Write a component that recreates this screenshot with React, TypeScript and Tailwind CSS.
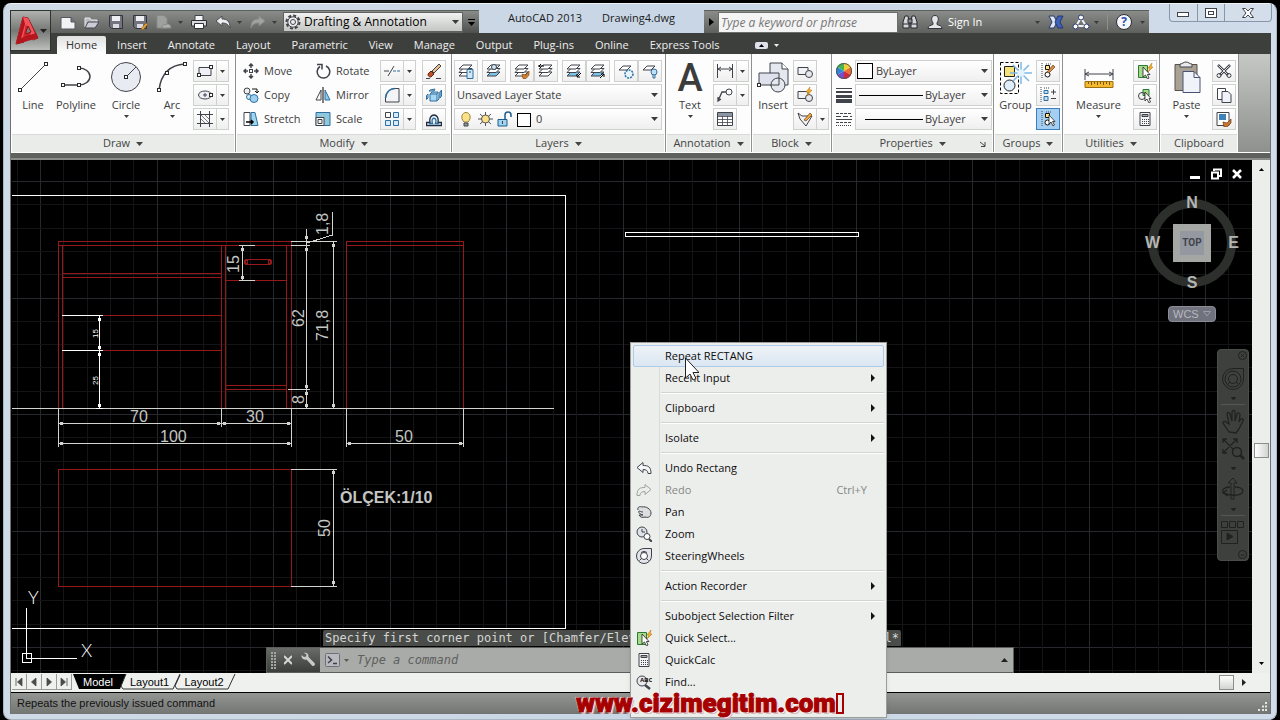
import type { ReactNode } from 'react';

const INK = '#41434b';
const BLUE = '#2f6f9f';

type IconProps = { w?: number; h?: number; className?: string; children: ReactNode };

function Icon({ w = 16, h = 16, className, children }: IconProps) {
    return (
        <svg width={w} height={h} viewBox={`0 0 ${w} ${h}`} fill="none" stroke={INK} className={`shrink-0 ${className ?? ''}`} aria-hidden="true">
            {children}
        </svg>
    );
}

function Caret({ small = false, className = '' }: { small?: boolean; className?: string }) {
    return (
        <svg width={small ? 5 : 7} height={small ? 3 : 4} viewBox="0 0 8 4" preserveAspectRatio="none" className={`shrink-0 fill-current ${className}`} aria-hidden="true">
            <path d="M0 0h8L4 4z" />
        </svg>
    );
}

function Node({ x, y }: { x: number; y: number }) {
    return <rect x={x - 1.5} y={y - 1.5} width="3" height="3" fill="#fff" stroke="#2c2c2c" />;
}

/* ---------- title bar ---------- */

const quickAccess: { label: string; icon: ReactNode; menu?: boolean; dim?: boolean }[] = [
    { label: 'New', icon: <path d="M1 3.500h10l4 4V15H1zM11 3.500V8h4" fill="#f2f2f4" stroke="#55575f" /> },
    { label: 'Open', icon: <><path d="M1 13V4h5l1 2h6v3" fill="#b9bcc4" stroke="#e8e8ea" /><path d="M1 14l3-6h11l-4 6z" fill="#c9ccd4" stroke="#44464e" /></> },
    { label: 'Save', icon: <><path d="M1.500 1.500h13v13h-11l-2-2z" fill="#71747e" stroke="#33353d" /><path d="M4 2h8v5H4z" fill="#eceef2" stroke="none" /><path d="M5 10h6v4H5z" fill="#d9dbe1" stroke="none" /></> },
    { label: 'Save As', icon: <><path d="M1.500 1.500h13v13h-11l-2-2z" fill="#71747e" stroke="#33353d" /><path d="M4 2h8v5H4z" fill="#eceef2" stroke="none" /><path d="M5 10h6v4H5z" fill="#d9dbe1" stroke="none" /><path d="M9 15l5-6 2 1-5 6z" fill="#f0a63a" stroke="#7a4b12" strokeWidth=".6" /></> },
    { label: 'Plot to web', menu: true, dim: true, icon: <><path d="M1 1.500h7l3 3V14H1z" fill="#a4a6a4" stroke="#8a8c8a" /><path d="M6 14c0-3 2-4 4-3 1-2 5-1 5 3z" fill="#b6b8b6" stroke="#8a8c8a" /></> },
    { label: 'Plot', icon: <><path d="M4 6V1.500h8V6" fill="#f5f5f7" /><path d="M.5 6.500h15V12H.5z" fill="#d7d9dd" stroke="#2e3036" /><path d="M3.500 9.500h9v5h-9z" fill="#fff" stroke="#2e3036" /></> },
    { label: 'Undo', menu: true, icon: <path d="M1 7l6-5v3c5 0 8 2 8 9-2-4-4-5-8-5v3z" fill="#eceef0" stroke="#4a4c52" /> },
    { label: 'Redo', menu: true, dim: true, icon: <path d="M15 7L9 2v3c-5 0-8 2-8 9 2-4 4-5 8-5v3z" fill="#a6a8a6" stroke="#8c8e8c" /> },
];

const ribbonTabs = ['Insert', 'Annotate', 'Layout', 'Parametric', 'View', 'Manage', 'Output', 'Plug-ins', 'Online', 'Express Tools'];

function AppButton() {
    return (
        <button aria-label="Application menu" className="flex h-[41px] w-[41px] items-center border border-[#303230] bg-linear-to-b from-[#b0b2b0] via-[#777977] to-[#bcbebc] pl-1 text-[#222]">
            <Icon w={25} h={34}>
                <path d="M8 3L1 30l8-2 1-5 6-2 2 5 5-2L13 4z" fill="#d7232b" stroke="#8c1016" />
                <path d="M8 3l5 1 9 20-4 2-7-16-4 18-6 2z" fill="#f0535a" stroke="none" />
                <path d="M8 3L1 30l4-2 5-18z" fill="#b4141c" stroke="none" />
                <path d="M11 18l2-6 3 6-5 2z" fill="#7d7f7d" stroke="#8c1016" />
                <path d="M3 25l18-6 2 5-21 6z" fill="#b3161d" stroke="none" />
            </Icon>
            <Caret />
        </button>
    );
}

function TitleBar() {
    return (
        <div className="flex h-[23px] items-stretch">
            <div className="flex w-[428px] items-center border-t border-[#5c5e5c] bg-linear-to-b from-[#8a8c8a] to-[#5f615f] pl-[9px] text-[#3a3c3a]">
                <div className="flex flex-1 items-center gap-2">
                    {quickAccess.map((q) => (
                        <button key={q.label} aria-label={q.label} className="flex items-center gap-1.5">
                            <Icon className={q.dim ? 'opacity-90' : ''}>{q.icon}</Icon>
                            {q.menu && <Caret small />}
                        </button>
                    ))}
                </div>
                <div className="relative h-[20px] w-[180px]">
                    <select aria-label="Workspace" className="block h-full w-full appearance-none border border-[#5f615f] bg-linear-to-b from-[#f0f1f0] to-[#c4c6c4] pl-5 text-[12px] leading-4 text-black outline-none">
                        <option>Drafting &amp; Annotation</option>
                    </select>
                    <Icon className="pointer-events-none absolute top-0.5 left-0.5">
                        <circle cx="8" cy="8" r="6.500" strokeDasharray="3 2" strokeWidth="2" />
                        <circle cx="8" cy="8" r="5.200" fill="#eceeec" />
                        <circle cx="8" cy="8" r="2.500" />
                    </Icon>
                    <Caret className="pointer-events-none absolute top-2 right-1" />
                </div>
                <button aria-label="Customize quick access" className="flex h-[22px] w-4 flex-col items-center justify-center gap-0.5 bg-linear-to-b from-[#8a8c8a] to-[#4e504e] text-black">
                    <span className="h-px w-[7px] bg-black" />
                    <Caret />
                </button>
            </div>
            <div className="flex flex-1 items-center justify-center gap-5 pb-1.5 text-[#1c1c1c]">
                <span>AutoCAD 2013</span>
                <span>Drawing4.dwg</span>
            </div>
            <div className="flex w-[445px] items-center border-t border-[#5c5e5c] bg-linear-to-b from-[#8a8c8a] to-[#5f615f] text-[#3a3c3a]">
                <button aria-label="Collapse search" className="flex h-full w-[14px] items-center justify-center">
                    <Icon w={5} h={8}><path d="M0 0v8l5-4z" fill="#000" stroke="none" /></Icon>
                </button>
                <input aria-label="Search" placeholder="Type a keyword or phrase" className="h-[21px] w-[180px] border border-[#6c6e6c] bg-[#f3f4f3] px-0.5 text-[12px] leading-4 italic outline-none placeholder:text-[#777]" />
                <button aria-label="Find" className="ml-1">
                    <Icon>
                        <path d="M1 14V8l2-6h3l1 6v6zM15 14V8l-2-6h-3L9 8v6z" fill="#d4d6da" stroke="#26282e" />
                        <path d="M6 5h4v4H6z" fill="#8c8e94" stroke="#26282e" />
                        <path d="M1 10h6M9 10h6" stroke="#26282e" />
                    </Icon>
                </button>
                <button className="ml-2 flex items-center gap-1 text-white">
                    <Icon w={18}>
                        <path d="M2 14.500c0-3 3-3 5-4V9C5 6 5 1.500 9 1.500S13 6 11 9v1.500c2 1 5 1 5 4z" fill="#e4e6ea" stroke="#33353b" />
                    </Icon>
                    <span>Sign In</span>
                </button>
                <div className="flex flex-1 items-center justify-end gap-2 pr-1">
                    <Caret small />
                    <button aria-label="Exchange">
                        <Icon>
                            <path d="M1 2h5l3 6-3 6H1l3-6z" fill="#dfe6f5" stroke="#25386f" />
                            <path d="M15 2h-5L7 8l3 6h5l-3-6z" fill="#3f62b8" stroke="#25386f" />
                        </Icon>
                    </button>
                    <button aria-label="Stay connected" className="flex items-center gap-1">
                        <Icon w={18}>
                            <path d="M9 4L4 12h10z" stroke="#eef0f6" strokeWidth="2" />
                            <circle cx="9" cy="3.500" r="2.500" fill="#fff" stroke="#2a3a70" /><circle cx="3.500" cy="12.500" r="2.500" fill="#fff" stroke="#2a3a70" /><circle cx="14.500" cy="12.500" r="2.500" fill="#fff" stroke="#2a3a70" />
                        </Icon>
                        <Caret small />
                    </button>
                    <span className="h-4 w-px bg-[#8e908e]" />
                    <button aria-label="Help" className="flex items-center gap-2">
                        <span className="flex h-4 w-4 items-center justify-center rounded-full border border-[#2b2b34] bg-[#f4f6fb] text-[12px] leading-none font-bold text-[#2c4fa8]">?</span>
                        <Caret small />
                    </button>
                </div>
            </div>
            <div className="flex w-[122px] items-start justify-end">
                <div className="-mt-1.5 -mr-px flex h-[18px] overflow-hidden rounded-b-sm border border-t-0 border-[#8696ab] bg-[#d3deea]">
                    <button aria-label="Minimize" className="flex w-[28px] items-center justify-center border-r border-[#8696ab] pt-1">
                        <Icon w={13} h={6}><rect x=".5" y=".5" width="11" height="4" fill="#fff" /></Icon>
                    </button>
                    <button aria-label="Restore" className="flex w-[27px] items-center justify-center border-r border-[#8696ab]">
                        <Icon w={12} h={10}><rect x=".5" y=".5" width="11" height="9" fill="#fff" /><rect x="3.500" y="3.500" width="5" height="3" /></Icon>
                    </button>
                    <button aria-label="Close" className="flex w-[46px] items-center justify-center">
                        <Icon w={12} h={10}><path d="M.5.500h3L6 3l2.500-2.500h3L8 5l3.500 4.500h-3L6 7 3.500 9.500h-3L4 5z" fill="#fff" /></Icon>
                    </button>
                </div>
            </div>
        </div>
    );
}

function RibbonTabs() {
    return (
        <div className="flex h-[21px] items-end gap-px bg-[#3d3f3d] pl-1.5 text-[#eee]">
            <button className="h-[18px] rounded-t-xs bg-linear-to-b from-[#dfe0df] to-white px-[9px] text-[#333]">Home</button>
            {ribbonTabs.map((tab) => (
                <button key={tab} className="h-[18px] px-[10px]">{tab}</button>
            ))}
            <button aria-label="Minimize ribbon" className="ml-6 flex h-[18px] items-center gap-1.5">
                <span className="flex h-[7px] w-[13px] items-center justify-center rounded-xs bg-[#dfe1ea] text-black"><Caret small className="rotate-180" /></span>
                <Caret small />
            </button>
        </div>
    );
}

/* ---------- ribbon ---------- */

function Panel({ title, width, noMenu, launcher, children }: { title: string; width: string; noMenu?: boolean; launcher?: boolean; children: ReactNode }) {
    return (
        <section className={`flex shrink-0 flex-col border-r border-[#8f918f] bg-[#fcfdfc] px-px ${width}`}>
            <div className="flex flex-1 items-start pt-1.5">{children}</div>
            <div className="relative flex h-[18px] items-center justify-center gap-1.5 border-t border-[#d8dad8] bg-[#eaecea] text-[#444]">
                <h2>{title}</h2>
                {!noMenu && <Caret />}
                {launcher && <Icon w={6} h={6} className="absolute right-1.5"><path d="M0 1l5 4M5 1v4.500H1" /></Icon>}
            </div>
        </section>
    );
}

function BigTool({ label, width, menu, children }: { label: string; width: string; menu?: boolean; children: ReactNode }) {
    return (
        <button className={`flex shrink-0 flex-col items-center ${width}`}>
            <Icon w={34} h={37}>{children}</Icon>
            <span className="leading-4">{label}</span>
            {menu && <Caret small className="mt-0.5" />}
        </button>
    );
}

function Tool({ label, menu, active, children }: { label: string; menu?: boolean; active?: boolean; children: ReactNode }) {
    return (
        <div className={`flex h-[22px] border ${active ? 'border-[#3a7fc0] bg-[#a5cef3]' : 'border-[#cfd1cf] bg-linear-to-b from-white to-[#efefef]'}`}>
            <button aria-label={label} className="flex w-[22px] items-center justify-center">
                <Icon>{children}</Icon>
            </button>
            {menu && (
                <button aria-label={`${label} options`} className="flex w-3 items-center justify-center border-l border-[#cfd1cf]"><Caret small /></button>
            )}
        </div>
    );
}

function TextTool({ label, children }: { label: string; children: ReactNode }) {
    return (
        <button className="flex h-[22px] items-center gap-[5px]">
            <Icon>{children}</Icon>
            <span>{label}</span>
        </button>
    );
}

function Stack({ className = '', children }: { className?: string; children: ReactNode }) {
    return <div className={`flex shrink-0 flex-col items-start gap-0.5 ${className}`}>{children}</div>;
}

function Combo({ label, value, pad, children }: { label: string; value: string; pad: string; children?: ReactNode }) {
    return (
        <div className="relative h-[22px] w-full">
            <select aria-label={label} className={`block h-full w-full appearance-none border border-[#cfd1cf] bg-linear-to-b from-white to-[#efefef] leading-4 outline-none ${pad}`}>
                <option>{value}</option>
            </select>
            <span className="pointer-events-none absolute inset-y-0 left-1 flex items-center gap-1">{children}</span>
            <Caret className="pointer-events-none absolute top-[9px] right-1" />
        </div>
    );
}

const sheets = (fill = '#fff') => (
    <>
        <path d="M1 13h9l4-4H5z" fill={fill} />
        <path d="M1 9.500h9l4-4H5z" fill="#fff" />
        <path d="M1 6h9l4-4H5z" fill="#fff" />
    </>
);

function DrawPanel() {
    return (
        <Panel title="Draw" width="w-[225px]">
            <BigTool label="Line" width="w-[42px]"><path d="M4 30L30 4" /><Node x={4} y={30} /><Node x={30} y={4} /></BigTool>
            <BigTool label="Polyline" width="w-[44px]"><path d="M4 25h16a11 8.500 0 0 0 0-17" strokeWidth="1.500" /><Node x={4} y={25} /><Node x={20} y={25} /><Node x={20} y={8} /></BigTool>
            <BigTool label="Circle" width="w-[56px]" menu><circle cx="17" cy="17" r="14.500" fill="#e9ebf3" /><path d="M17 17L27 7" /><Node x={17} y={17} /></BigTool>
            <BigTool label="Arc" width="w-[36px]" menu><path d="M4 30C6 14 14 5 30 4" strokeWidth="1.500" /><Node x={4} y={30} /><Node x={12} y={13} /><Node x={30} y={4} /></BigTool>
            <Stack className="ml-[3px]">
                <Tool label="Rectangle" menu><path d="M2 4.500h12v8H2z" fill="#eef0f5" /><Node x={2} y={12} /><Node x={14} y={4} /></Tool>
                <Tool label="Ellipse" menu><ellipse cx="8" cy="8" rx="6.500" ry="4" fill="#eef0f5" /><path d="M6 8h4M8 6v4" /><Node x={14} y={8} /></Tool>
                <Tool label="Hatch" menu><path d="M3.500 0v16M12.500 0v16M0 3.500h16M0 12.500h16" /><path d="M4 8l4 4M4 4l8 8M8 4l4 4" strokeWidth=".7" /></Tool>
            </Stack>
        </Panel>
    );
}

function ModifyPanel() {
    return (
        <Panel title="Modify" width="w-[216px]">
            <Stack className="ml-1.5 w-[72px]">
                <TextTool label="Move"><path d="M8 1v4M8 11v4M1 8h4M11 8h4M6 3l2-2 2 2M6 13l2 2 2-2M3 6L1 8l2 2M13 6l2 2-2 2" strokeWidth="1.500" /><rect x="6.500" y="6.500" width="3" height="3" /></TextTool>
                <TextTool label="Copy"><circle cx="4" cy="4" r="3" fill="#eee" /><circle cx="6" cy="10" r="2.500" fill="#d9ecfa" stroke={BLUE} /><circle cx="11" cy="11.500" r="4" fill="#9fd0f0" stroke={BLUE} /><path d="M9 2h5v4M12 4l2 2 2-2" stroke="#111" /></TextTool>
                <TextTool label="Stretch"><path d="M1 1.500h6v13H1z" fill="#fff" /><path d="M8 1.500h4l3 13H8z" fill="#9fd4ee" stroke={BLUE} /><path d="M3 11h7M8 9l2 2-2 2" stroke="#000" strokeWidth="1.500" /></TextTool>
            </Stack>
            <Stack className="w-[65px]">
                <TextTool label="Rotate"><path d="M5 3.500A6.300 6.300 0 1 0 11 3" strokeWidth="1.500" /><path d="M2 1.500h5v5" strokeWidth="1.500" /></TextTool>
                <TextTool label="Mirror"><path d="M8 0v16" stroke="#000" /><path d="M6 3v10H1z" fill="#fff" /><path d="M10 3v10h5z" fill="#8ccbec" stroke={BLUE} /></TextTool>
                <TextTool label="Scale"><path d="M1 1.500h14v13H1z" fill="#8fc8dc" stroke={BLUE} /><path d="M1 6.500h8v8H1z" fill="#fff" /><path d="M3 8.500h4v4H3z" fill="#eee" /></TextTool>
            </Stack>
            <Stack>
                <Tool label="Trim" menu><path d="M0 8h5" /><path d="M9 8h7" stroke={BLUE} strokeDasharray="3 1" /><path d="M4 13L10 3" /></Tool>
                <Tool label="Fillet" menu><path d="M1.500 15V11C2 5 6 1.500 11 1.500h4V15z" fill="#f2f4f8" /><path d="M1.500 11C2 5 6 1.500 11 1.500" stroke={BLUE} strokeWidth="1.500" /></Tool>
                <Tool label="Array" menu><path d="M1.500 1.500h5v5h-5z" /><path d="M9.500 1.500h5v5h-5zM1.500 9.500h5v5h-5zM9.500 9.500h5v5h-5z" fill="#d3ebfa" stroke={BLUE} /></Tool>
            </Stack>
            <Stack className="ml-1.5">
                <Tool label="Erase"><path d="M6 8l7-7 2 2-7 7z" fill="#e8c090" /><path d="M2 11l3-3 3 3-3 3c-2 0-3-1-3-3z" fill="#c0502a" stroke="#5f2410" /><path d="M0 15.500h4M10 15.500h5" /></Tool>
                <Tool label="Explode"><path d="M4 7h7v7H4zM4 7l2-2h6l-1 2M11 14l2-2V5" fill="#a7d8f3" stroke={BLUE} /><path d="M2 7L.5 8.500v4L2 11zM4 3l5-1-1 2H3zM14 5l1.500-2v6L14 11z" fill="#a7d8f3" stroke={BLUE} /></Tool>
                <Tool label="Offset"><path d="M.5 14.500h15v-3H12c2-10-10-10-8 0H.5z" fill="#e4f1fa" stroke="#1c2c3c" strokeWidth="1.300" /><path d="M3 12.500h3.500c-2.500-7 5.500-7 3 0H13" stroke={BLUE} strokeWidth="1.300" /></Tool>
            </Stack>
        </Panel>
    );
}

function LayersPanel() {
    return (
        <Panel title="Layers" width="w-[214px]">
            <Stack className="ml-px w-[208px]">
                <div className="flex">
                    <Tool label="Layer properties">{sheets()}<path d="M9 6.500h6v9H9z" fill="#cfe8fa" stroke={BLUE} /><path d="M11 9h2" /></Tool>
                    <div className="ml-1"><Tool label="Make current">{sheets('#7cc4ec')}<circle cx="8" cy="4" r="2.500" fill="#cfe8fa" /></Tool></div>
                    <div className="ml-1 flex"><Tool label="Match">{sheets()}<path d="M8 11l4 1 3-4v4l-3 3.500H9z" fill="#d08030" stroke="#844812" strokeWidth=".7" /></Tool><Tool label="Previous">{sheets()}<path d="M0 3h6M3 1L1 3l2 2" stroke="#000" /></Tool></div>
                    <div className="ml-1 flex"><Tool label="Isolate">{sheets('#7cc4ec')}<path d="M15 10l-4 4v-3m0 3h3" stroke="#000" /></Tool><Tool label="Unisolate">{sheets('#7cc4ec')}<path d="M10 15l4-4h-3m3 0v3" stroke="#000" /></Tool></div>
                    <div className="ml-1 flex"><Tool label="Freeze"><path d="M1 7h8l4-4H5z" fill="#fff" /><circle cx="11" cy="11" r="4" fill="#e5f4fd" stroke={BLUE} strokeDasharray="2 1" strokeWidth="1.500" /></Tool><Tool label="Off"><path d="M1 7h8l4-4H5z" fill="#fff" /><circle cx="12" cy="9" r="3" fill="#bfe0f5" stroke={BLUE} /><path d="M11 12v3h2v-3" stroke={BLUE} /></Tool></div>
                </div>
                <Combo label="Layer state" value="Unsaved Layer State" pad="pl-0.5" />
                <Combo label="Layer" value="0" pad="pl-[81px]">
                    <Icon><path d="M6 11C2 7 4 1.500 8 1.500S14 7 10 11z" fill="#fbe28a" stroke="#94803a" /><path d="M6 12h4v3H6z" fill="#999" /></Icon>
                    <Icon w={15}><path d="M7.500 1v14M0 8h15M2 3l11 10M13 3L2 13" stroke="#555" /><circle cx="7.500" cy="8" r="4" fill="#fbe08a" stroke="#555" /></Icon>
                    <Icon><path d="M1 8.500h9V15H1z" fill="#9fd4f3" stroke="#1d5c8c" /><path d="M8 8V4c0-4 6-4 6 0v2" stroke="#1d5c8c" strokeWidth="1.500" /><path d="M5.500 10v3" /></Icon>
                    <span className="mt-px h-[14px] w-[14px] border border-black bg-white" />
                </Combo>
            </Stack>
        </Panel>
    );
}

function AnnotationPanel() {
    return (
        <Panel title="Annotation" width="w-[86px]">
            <button className="flex w-[46px] flex-col items-center">
                <span className="h-[37px] font-[Roboto] text-[38px] leading-9 font-medium">A</span>
                <span className="leading-4">Text</span>
                <Caret small className="mt-0.5" />
            </button>
            <Stack>
                <Tool label="Linear dimension" menu><path d="M.5 1v14M15.500 1v14M1 6h14M4 4L1 6l3 2M12 4l3 2-3 2" /></Tool>
                <Tool label="Leader" menu><circle cx="12" cy="5" r="3" /><path d="M9 5H5L1 14M1 10v4l3-2" strokeWidth="1.300" /></Tool>
                <Tool label="Table"><path d="M.5 1.500h15v13H.5z" fill="#fff" /><path d="M1 2h14v3H1z" fill="#8b95a4" stroke="none" /><path d="M0 5.500h16M0 8.500h16M0 11.500h16M5.500 5v10M10.500 5v10" strokeWidth=".8" /></Tool>
            </Stack>
        </Panel>
    );
}

function BlockPanel() {
    const shape = <><path d="M1 4.500h10v7H1z" fill="#f0f2f6" /><circle cx="12" cy="11" r="3.500" fill="#e6e8ee" /></>;
    return (
        <Panel title="Block" width="w-[80px]">
            <BigTool label="Insert" width="w-[40px]">
                <path d="M14 3h12l6 6v16H14z" fill="#e6e8f0" /><path d="M26 3v6h6" fill="#fff" />
                <path d="M3 13h20v12H3z" fill="#dfe2ec" /><circle cx="22" cy="25" r="7" fill="#e6e8f0" /><path d="M15 25h8v-7" /><Node x={3} y={25} />
            </BigTool>
            <Stack>
                <Tool label="Create block">{shape}</Tool>
                <Tool label="Edit block">{shape}<path d="M13 0l-4 5h3l-2 4 5-6h-3z" fill="#f7b52c" stroke="#b87912" strokeWidth=".6" /></Tool>
                <Tool label="Edit attributes" menu><path d="M1 2l4 3h10l-6 10-6-7z" fill="#f0f2f6" /><path d="M7 9l6-7 2 2-6 6z" fill="#f0a63a" stroke="#6f4210" strokeWidth=".7" /></Tool>
            </Stack>
        </Panel>
    );
}

function PropertiesPanel() {
    return (
        <Panel title="Properties" width="w-[162px]" launcher>
            <Stack className="mt-[3px] ml-[3px] gap-2 [&>svg]:block">
                <Icon><path d="M8 8V0a8 8 0 0 1 7 4z" fill="#f2d03a" stroke="none" /><path d="M8 8l7-4a8 8 0 0 1 0 8z" fill="#e8742c" stroke="none" /><path d="M8 8l7 4a8 8 0 0 1-7 4z" fill="#d02a3c" stroke="none" /><path d="M8 8v8a8 8 0 0 1-7-4z" fill="#7450c8" stroke="none" /><path d="M8 8l-7 4a8 8 0 0 1 0-8z" fill="#2e86dc" stroke="none" /><path d="M8 8L1 4a8 8 0 0 1 7-4z" fill="#46b450" stroke="none" /><circle cx="8" cy="8" r="7.500" stroke="#555" /></Icon>
                <Icon><path d="M0 1.500h16" /><path d="M0 5h16" strokeWidth="2" /><path d="M0 9.500h16" strokeWidth="3" /><path d="M0 14h16" strokeWidth="4" /></Icon>
                <Icon><path d="M0 2.500h16M0 11.500h16" strokeDasharray="3 1" /><path d="M0 5.500h16" strokeDasharray="5 2" /><path d="M0 8.500h16" /><path d="M0 14.500h16" strokeDasharray="1 1" /></Icon>
            </Stack>
            <Stack className="ml-[3px] w-[137px]">
                <Combo label="Object color" value="ByLayer" pad="pl-[20px]"><span className="-ml-0.5 h-4 w-4 border border-black bg-white" /></Combo>
                <Combo label="Lineweight" value="ByLayer" pad="pl-[69px]"><span className="h-px w-16 bg-black" /></Combo>
                <Combo label="Linetype" value="ByLayer" pad="pl-[69px]"><span className="ml-1.5 h-px w-[58px] bg-black" /></Combo>
            </Stack>
        </Panel>
    );
}

function GroupsPanel() {
    const list = <><path d="M2 0v16M6 1h6" strokeDasharray="1 1" /><path d="M5.500 2.500h4v4h-4z" fill="#ffe98a" stroke="#111" /><circle cx="7.500" cy="11.500" r="2.500" fill="#fff" stroke="#111" /></>;
    return (
        <Panel title="Groups" width="w-[69px]">
            <BigTool label="Group" width="w-[41px]">
                <path d="M1.500 2.500h18v31h-18z" stroke="#000" strokeDasharray="3 2" />
                <path d="M5.500 6.500h10v10h-10z" fill="#f4e27a" stroke="#222" />
                <path d="M22 2v22M11 13h22M14 5l16 16M30 5L14 21" stroke="#7db8e6" strokeWidth="1.500" /><circle cx="22" cy="13" r="3.500" fill="#e3f3ff" stroke="none" />
                <circle cx="10.500" cy="25.500" r="5.500" fill="#dfeefa" stroke="#222" />
            </BigTool>
            <Stack>
                <Tool label="Ungroup">{list}<path d="M7 9l6-7 2 2-6 6z" fill="#d88a48" stroke="#6f4210" strokeWidth=".7" /></Tool>
                <Tool label="Group edit"><path d="M1 0v16M4 1h6" strokeDasharray="1 1" /><path d="M4 3.500h4v3H4zM4 9.500h4v4H4z" fill="#bfe0f7" stroke={BLUE} /><path d="M11 5h5M13.500 2.500v5M11 11.500h5" /></Tool>
                <Tool label="Group selection" active>{list}<path d="M9 4v9l2-2 2 4 1.500-1-2-3.500H15z" fill="#fff" stroke="#222" strokeWidth=".8" /></Tool>
            </Stack>
        </Panel>
    );
}

const quickSelect = (
    <>
        <path d="M1.500 2.500h9v12h-9z" fill="#a7d98a" stroke="#2b7a34" />
        <path d="M15 0l-4 5h2l-2 4 5-5h-2z" fill="#f7b52c" stroke="#b87912" strokeWidth=".6" />
        <path d="M6 4v10l2.500-2 2 4 1.500-1-1.500-3.500H13z" fill="#fff" stroke="#222" strokeWidth=".8" />
    </>
);

const calculator = (
    <>
        <path d="M3 1.500h10v13H3z" fill="#f4f5f7" />
        <path d="M5 3.500h6v2H5z" fill="#aaa" />
        <path d="M5 8.500h7M5 10.500h7M5 12.500h7" strokeDasharray="1 1" />
    </>
);

function UtilitiesPanel() {
    return (
        <Panel title="Utilities" width="w-[97px]">
            <BigTool label="Measure" width="w-[69px]" menu>
                <path d="M3 9v11M31 9v11M3 14h28M7 12l-4 2 4 2M27 12l4 2-4 2" />
                <path d="M3 21.500h28v6H3z" fill="#f4b92f" stroke="#9c6f10" /><path d="M6.500 22v2M9.500 22v3M12.500 22v2M15.500 22v3M18.500 22v2M21.500 22v3M24.500 22v2M27.500 22v3" stroke="#7a5508" />
            </BigTool>
            <Stack>
                <Tool label="Quick select">{quickSelect}</Tool>
                <Tool label="Select similar"><path d="M6 2.500h6v6H6z" fill="#a7d98a" stroke="#2b7a34" /><circle cx="5" cy="9" r="3.500" /><path d="M8 5v9l2-2 2 4 1.500-1-1.500-3.500H14z" fill="#fff" stroke="#222" strokeWidth=".8" /></Tool>
                <Tool label="Calculator">{calculator}</Tool>
            </Stack>
        </Panel>
    );
}

function ClipboardPanel() {
    return (
        <Panel title="Clipboard" width="w-[79px]" noMenu>
            <BigTool label="Paste" width="w-[51px]" menu>
                <path d="M5 4.500h22v26H5z" fill="#a9a096" stroke="#5a5048" /><path d="M10 7V4c3 0 3-2 6-2s3 2 6 2v3z" fill="#e9eaec" />
                <path d="M13 11.500h11l6 6v15H13z" fill="#f1f3fa" stroke="#4a5270" /><path d="M24 11.500v6h6" stroke="#4a5270" />
            </BigTool>
            <Stack>
                <Tool label="Cut"><path d="M2 2l10 10M14 2L4 12" strokeWidth="2.500" /><path d="M2.500 2.500l9 9M13.500 2.500l-9 9" stroke="#dfe1e5" /><circle cx="3" cy="12.500" r="2" /><circle cx="13" cy="12.500" r="2" /></Tool>
                <Tool label="Copy clip"><path d="M1.500 1.500h8v11h-8z" fill="#fff" /><path d="M6 4.500h6l3 3v8H6z" fill="#f1f3fa" /></Tool>
                <Tool label="Match properties"><path d="M1 1.500h12v13H1z" fill="#fff" /><path d="M3 3h7v6H3z" fill="#3f82b8" stroke="none" /><path d="M7 11l4 1 4-4v4l-4 4H8z" fill="#c77430" stroke="#6b3a10" strokeWidth=".7" /></Tool>
            </Stack>
        </Panel>
    );
}

/* ---------- drawing area ---------- */

const STEP = 116.5;
const minor = Array.from({ length: 120 }, (_, i) => i - 10);

function Arrowheads({ points }: { points: [number, number][] }) {
    return (
        <>
            {points.map(([x, y]) => (
                <rect key={`${x}-${y}`} x={x - 1} y={y - 1} width="3" height="3" stroke="none" fill="currentColor" />
            ))}
        </>
    );
}

function VText({ x, y, size = 16, children }: { x: number; y: number; size?: number; children: string }) {
    return <text transform={`translate(${x} ${y}) rotate(-90)`} fontSize={size}>{children}</text>;
}

function Drawing() {
    return (
        <svg viewBox="12 160 1240 513" preserveAspectRatio="xMinYMin slice" className="absolute inset-0 h-full w-full font-['Liberation_Sans',sans-serif]" fill="none" shapeRendering="crispEdges">
            <g>
                {minor.map((i) => (
                    <g key={i} stroke={i % 5 === 0 ? '#28282f' : '#141417'}>
                        <path d={`M${Math.round(40 + (i * STEP) / 5) + 0.5} 160V2000`} />
                        <path d={`M12 ${Math.round(181 + (i * STEP) / 5) + 0.5}H3000`} />
                    </g>
                ))}
            </g>
            <path d="M12 195.500H565.500V628.500H12" stroke="#fff" />
            <g stroke="#961818">
                <path d="M58.500 408V241.500H291.500V408M58.500 245.500H291.500M62.500 245V408M221.500 245V408M225.500 245V408M286.500 245V408" />
                <path d="M62 273.500H221M62 277.500H221M62 315.500H221M62 350.500H221M225 280.500H286M225 385.500H286M225 389.500H286" />
                <rect x="244.500" y="259.500" width="27" height="5" rx="2" /><rect x="245.500" y="260.500" width="2" height="3" /><rect x="268.500" y="260.500" width="2" height="3" />
                <path d="M346.500 408V241.500H463.500V408M346.500 245.500H463.500" />
                <rect x="58.500" y="469.500" width="233" height="117" />
            </g>
            <g stroke="#d2d4d0" className="text-[#d2d4d0]">
                <path d="M12 408.500H554M58.500 408V447M221.500 408V427M291.500 408V447M58 423.500H291M58 443.500H291M346.500 408V447M463.500 408V447M346 443.500H463" />
                <path d="M306.500 229V408M333.500 241V408M291 241.500H337M291 245.500H310M288 389.500H310M332.500 212V235L307 243" />
                <path d="M242.500 245V280M239 245.500H255M239 280.500H255M333.500 469V586M291 469.500H337M291 586.500H337" />
                <Arrowheads points={[[61, 423], [218, 423], [224, 423], [288, 423], [61, 443], [288, 443], [349, 443], [460, 443], [306, 237], [306, 249], [306, 386], [306, 393], [306, 405], [333, 245], [333, 405], [242, 249], [242, 277], [333, 472], [333, 582]]} />
            </g>
            <g stroke="#fff" className="text-white">
                <path d="M99.500 315V408M62 315.500H103M62 350.500H103M96 408.500H103" />
                <Arrowheads points={[[99, 319], [99, 347], [99, 354], [99, 405]]} />
                <rect x="625.500" y="232.500" width="233" height="4" />
                <path d="M26.500 608V658.500H77M22.500 653.500h9v9h-9z" />
            </g>
            <g fill="#c4c6c4">
                <text x="130" y="422" fontSize="16">70</text>
                <text x="246" y="422" fontSize="16">30</text>
                <text x="160" y="442" fontSize="16">100</text>
                <text x="395" y="442" fontSize="16">50</text>
                <VText x={328} y={235}>1,8</VText>
                <VText x={328} y={341}>71,8</VText>
                <VText x={304} y={327}>62</VText>
                <VText x={304} y={404}>8</VText>
                <VText x={239} y={273}>15</VText>
                <VText x={330} y={537}>50</VText>
                <text x="340" y="503" fontSize="16" fontWeight="700">ÖLÇEK:1/10</text>
            </g>
            <g fill="#fff">
                <VText x={98} y={338} size={8}>15</VText>
                <VText x={98} y={385} size={8}>25</VText>
                <text x="28" y="604" fontSize="18" className="font-['Lato'] font-light">Y</text>
                <text x="81" y="657" fontSize="18" className="font-['Lato'] font-light">X</text>
            </g>
        </svg>
    );
}

function ViewCube() {
    return (
        <div className="absolute top-[35px] right-[13px] flex flex-col items-center">
            <div className="relative flex h-[96px] w-[94px] items-center justify-center text-base leading-none font-bold text-[#b4b6b4] font-['Liberation_Sans',sans-serif]">
                <div className="h-[88px] w-[88px] rounded-full border-[9px] border-[#2d2f2d]" />
                <span className="absolute top-0">N</span>
                <span className="absolute bottom-0">S</span>
                <span className="absolute left-0">W</span>
                <span className="absolute right-0">E</span>
                <button className="absolute h-[38px] w-[38px] border-[7px] border-[#a5a7a4] bg-[#9498a0] text-[#42444c]">
                    <span className="-mx-2 block text-center font-['Roboto'] text-[10px]">TOP</span>
                </button>
            </div>
            <button className="mt-[15px] flex h-4 w-12 items-center justify-between rounded-sm border border-[#8b8d98] bg-[#70727e] px-1 text-[11px] leading-none text-[#b8babe] font-['Liberation_Sans',sans-serif]">
                WCS
                <Icon w={8} h={6}><path d="M.5.500h7L4 5z" stroke="#9a9ca8" /></Icon>
            </button>
        </div>
    );
}

function NavigationBar() {
    return (
        <div className="absolute top-[189px] right-[3px] flex h-[212px] w-8 flex-col items-center rounded-sm border border-[#4b4d4a] bg-[#3e403d] text-[#20221f] [&_svg]:stroke-[#20221f]">
            <button aria-label="Close navigation bar" className="self-end p-px"><Icon w={9} h={9}><circle cx="4.500" cy="4.500" r="4" /><path d="M3 3l3 3M6 3L3 6" /></Icon></button>
            <button aria-label="Steering wheel" className="mt-1.5"><Icon w={24} h={24}><path d="M12 1.500h10.500V12A10.500 10.500 0 1 1 12 1.500z" /><circle cx="12" cy="12" r="8" /><circle cx="12" cy="12" r="4.500" /><path d="M6 18l3-3M18 18l-3-3" /></Icon></button>
            <Caret small className="mt-1.5" />
            <span className="mt-1 h-px w-6 bg-[#555754]" />
            <button aria-label="Pan" className="mt-1"><Icon w={24} h={26}><path d="M8 23L2 14c0-2 2-2 3-1l3 2-2-10c0-2 2-2 3 0l2 7V3c0-2 3-2 3 0v9l2-7c1-2 3-1 3 1l-1 7 2-3c1-1 3 0 2 2l-4 8-3 4z" strokeWidth="1.300" /></Icon></button>
            <button aria-label="Zoom extents" className="mt-0.5"><Icon w={24} h={24}><path d="M2 2l14 14M16 2L2 16M2 6V2h4M12 2h4v4M2 12v4h4" strokeWidth="1.300" /><circle cx="16" cy="15" r="4.500" fill="#3e403d" strokeWidth="1.500" /><path d="M19 18l4 4" strokeWidth="2.500" /></Icon></button>
            <Caret small className="mt-1.5" />
            <button aria-label="Orbit" className="mt-1.5"><Icon w={24} h={26}><path d="M10 23V7H7l5-5 4 5h-3v16z" /><path d="M9 11C3 11 0 14 3 17c5 3 15 3 18 0 3-4-2-6-7-6M6 14l-4 3 5 3" strokeWidth="1.300" /></Icon></button>
            <Caret small className="mt-1.5" />
            <span className="mt-1 h-px w-6 bg-[#555754]" />
            <button aria-label="Show motion" className="mt-1"><Icon w={24} h={24}><path d="M.5 1.500h6v6h-6zM8.500 1.500h6v6h-6zM16.500 1.500h6v6h-6zM.5 10.500h16v13H.5z" /><path d="M6 13v7l6-3.500z" fill="#20221f" /></Icon></button>
            <button aria-label="Customize navigation bar" className="mt-auto self-end p-px"><Icon w={9} h={9}><circle cx="4.500" cy="4.500" r="4" /><path d="M3 4l1.500 2L6 4" /></Icon></button>
        </div>
    );
}

function CommandLine() {
    return (
        <div className="absolute bottom-0 left-[254px] w-[748px] font-['DejaVu_Sans_Mono',monospace] text-[12px]">
            <div className="ml-[57px] flex h-4 w-[578px] items-center justify-between rounded-t-xs bg-[#4a4c4a] px-0.5 leading-4 whitespace-nowrap text-[#d4d6d4]">
                <span>Specify first corner point or [Chamfer/Eleva</span>
                <span>el*</span>
            </div>
            <div className="mt-px flex h-[26px] items-stretch border border-[#5c5e5c] bg-[#a9aba9]">
                <div className="flex w-[53px] items-center gap-2 bg-linear-to-b from-[#6a6c6a] to-[#3c3e3c] pl-1">
                    <Icon w={5} h={17}><path d="M1 0v17M4 0v17" stroke="#a4a6a4" strokeWidth="2" strokeDasharray="2 1" /></Icon>
                    <button aria-label="Close command line"><Icon w={8} h={10}><path d="M0 1l8 8M8 1L0 9" stroke="#d4d6d4" strokeWidth="2" /></Icon></button>
                    <button aria-label="Customize command line"><Icon><path d="M2.500 6.500a4 4 0 0 1-1-3.500l2.500 2 2-.5.500-2-2.500-1.500c3-1 5 1.500 4.500 4l6 6c1.500 2-1 4-2.500 2.500l-5.500-6c-2 .5-3 0-4-1z" fill="#c8cac8" stroke="none" /></Icon></button>
                </div>
                <button aria-label="Recent commands" className="ml-[5px] flex items-center gap-1 text-[#5a5c5a]">
                    <Icon w={15} h={14}><rect x=".5" y=".5" width="14" height="13" rx="1" fill="#b8bac0" stroke="#6c6e78" /><path d="M3 3.500L6.500 7 3 10M8 10.500h4" stroke="#3c3e48" strokeWidth="1.500" /></Icon>
                    <Caret small />
                </button>
                <input aria-label="Command" placeholder="Type a command" className="ml-2 min-w-0 flex-1 bg-transparent italic outline-none placeholder:text-[#5e605e]" />
                <button aria-label="Expand history" className="px-[5px] text-[#222]"><Caret className="rotate-180" /></button>
            </div>
        </div>
    );
}

function Canvas() {
    return (
        <div className="flex flex-1 bg-black pl-px">
            <main className="relative flex-1 overflow-hidden">
                <Drawing />
                <div className="absolute top-2 right-2.5 flex items-center gap-2.5">
                    <button aria-label="Minimize drawing"><Icon w={12} h={12}><path d="M1 9.500h10" stroke="#fff" strokeWidth="3" /></Icon></button>
                    <button aria-label="Restore drawing"><Icon w={11} h={12}><path d="M3 3V1.500h7V8H8M1 4.500h6v6H1z" stroke="#fff" strokeWidth="2" /></Icon></button>
                    <button aria-label="Close drawing"><Icon w={10} h={12}><path d="M1 2l8 8M9 2l-8 8" stroke="#fff" strokeWidth="2.500" /></Icon></button>
                </div>
                <ViewCube />
                <NavigationBar />
                <CommandLine />
            </main>
            <div className="flex w-[18px] flex-col items-center justify-between bg-[#eceeec] py-2 text-black">
                <button aria-label="Scroll up" className="leading-none"><Caret small className="rotate-180" /></button>
                <div className="mt-[68px] h-[15px] w-[15px] border border-[#8c8e8c] bg-linear-to-r from-white to-[#d2d4d2]" />
                <button aria-label="Scroll down" className="leading-none"><Caret small /></button>
            </div>
        </div>
    );
}

const sheetNav = [
    { label: 'First layout', d: 'M2 1v8M8 1v8L3.500 5z' },
    { label: 'Previous layout', d: 'M7 1v8L2.500 5z' },
    { label: 'Next layout', d: 'M3 1v8l4.500-4z' },
    { label: 'Last layout', d: 'M8 1v8M2 1v8l4.500-4z' },
];

function LayoutTabs() {
    return (
        <div className="flex h-[19px] items-start bg-[#eff1ef] pt-px pl-px text-black font-['Liberation_Sans',sans-serif]">
            {sheetNav.map((n) => (
                <button key={n.label} aria-label={n.label} className="flex h-4 w-[15px] items-center justify-center border-r border-b border-[#9a9c9a]">
                    <Icon w={10} h={10}><path d={n.d} fill="#4a4c4a" stroke="#4a4c4a" strokeWidth=".8" /></Icon>
                </button>
            ))}
            <div className="relative ml-px flex h-4 items-center">
                <svg width="164" height="16" viewBox="0 0 164 16" fill="none" stroke="#333" className="absolute inset-0" aria-hidden="true">
                    <path d="M0 0h53l-6 15H6z" fill="#000" stroke="none" />
                    <path d="M53 0l-5 12 2 3h50l7-15M107 1l-5 11 2 3h51l7-15" />
                </svg>
                <button className="relative w-[50px] text-white">Model</button>
                <button className="relative w-[53px]">Layout1</button>
                <button className="relative w-[56px]">Layout2</button>
            </div>
            <div className="ml-auto flex h-[17px] items-center gap-2">
                <div className="h-[15px] w-[15px] border border-[#8c8e8c] bg-linear-to-b from-white to-[#d2d4d2]" />
                <button aria-label="Scroll right" className="mr-6"><Icon w={4} h={7}><path d="M0 0v7l4-3.500z" fill="#222" stroke="none" /></Icon></button>
            </div>
        </div>
    );
}

/* ---------- context menu ---------- */

type MenuItem = { label: string; sub?: boolean; icon?: ReactNode; hint?: string; disabled?: boolean; active?: boolean };

const menuGroups: MenuItem[][] = [
    [{ label: 'Repeat RECTANG', active: true }, { label: 'Recent Input', sub: true }],
    [{ label: 'Clipboard', sub: true }],
    [{ label: 'Isolate', sub: true }],
    [
        { label: 'Undo Rectang', icon: <path d="M1 7.500l6-5v3c5 0 8 1 8 8h-3c0-3-2-4-5-4v3z" fill="#f6f7f8" /> },
        { label: 'Redo', hint: 'Ctrl+Y', disabled: true, icon: <path d="M15 7.500l-6-5v3c-5 0-8 1-8 8h3c0-3 2-4 5-4v3z" stroke="#a0a2a0" /> },
        { label: 'Pan', icon: <path d="M2 6c-1-3 2-4 4-3 4-1 9 2 9 6s-3 5-6 4c-3 1-5 0-6-2h4c-3-1-5-2-4-4 1 0 2 1 4 1" fill="#dcdee0" /> },
        { label: 'Zoom', icon: <><circle cx="6" cy="6" r="5" fill="#dfe2e8" /><path d="M6 3v3h3" /><circle cx="11" cy="10.500" r="3" fill="#fff" /><path d="M13 13l3 3" strokeWidth="2" /></> },
        { label: 'SteeringWheels', icon: <><path d="M8 .5h7.500V8A7.500 7.500 0 1 1 8 .5z" fill="#e4e6ec" /><circle cx="8" cy="8" r="3.500" fill="#fff" /><path d="M3.500 12.500l2-2M12.500 12.500l-2-2M5 4.500a5 5 0 0 1 6 0" /></> },
    ],
    [{ label: 'Action Recorder', sub: true }],
    [
        { label: 'Subobject Selection Filter', sub: true },
        { label: 'Quick Select...', icon: quickSelect },
        { label: 'QuickCalc', icon: calculator },
        { label: 'Find...', icon: <><circle cx="6" cy="7" r="5" fill="#e8eaf0" /><path d="M9 11l5 4" strokeWidth="2.500" /><text x="4" y="8" fontSize="6" fontWeight="700" fill="#000" stroke="none" className="font-['Liberation_Sans']">ABC</text></> },
    ],
];

function ContextMenu() {
    return (
        <div role="menu" className="absolute top-[342px] left-[630px] w-[257px] border border-[#9b9d9b] bg-[#eceeec] px-0.5 pt-0.5 pb-6 text-[#0c0c0c] shadow-md">
            <div className="pointer-events-none absolute inset-y-0.5 left-[28px] w-px bg-[#d9dbd9]" />
            {menuGroups.map((group, i) => (
                <div key={group[0].label}>
                    {i > 0 && <div className="my-[3px] ml-[28px] h-0.5 border-t border-[#d2d4d2] bg-white" />}
                    {group.map((item) => (
                        <button
                            key={item.label}
                            role="menuitem"
                            disabled={item.disabled}
                            className={`relative flex h-[22px] w-full items-center rounded-xs border pr-2 text-left ${item.active ? 'border-[#aecbe8] bg-linear-to-b from-[#eef2f6] to-[#dbe7f3]' : 'border-transparent'} ${item.disabled ? 'text-[#858785]' : ''}`}
                        >
                            <span className="w-[31px] pl-0.5">{item.icon && <Icon>{item.icon}</Icon>}</span>
                            <span className="flex-1">{item.label}</span>
                            {item.hint && <span className="mr-2">{item.hint}</span>}
                            {item.sub && <Icon w={4} h={8}><path d="M0 0v8l4-4z" fill="#111" stroke="none" /></Icon>}
                        </button>
                    ))}
                </div>
            ))}
        </div>
    );
}

export default function App() {
    return (
        <div className="relative flex min-h-screen overflow-hidden bg-black px-[3px] pt-[3px] font-['Open_Sans',sans-serif] text-[11px] text-[#3c3c3c] select-none">
            <div className="flex min-w-0 flex-1 flex-col rounded-lg border border-t-[#eef3f8] border-[#a9b6c4] bg-linear-to-r from-[#cfdae7] via-[#c9d6e5] to-[#d0dcea] pt-1.5 pr-[5px] pb-[5px] pl-1.5">
                <div className="flex">
                    <div className="bg-[#3d3f3d]"><AppButton /></div>
                    <div className="min-w-0 flex-1">
                        <TitleBar />
                        <RibbonTabs />
                    </div>
                </div>
                <div className="flex flex-1 flex-col border-x border-[#6f716f]">
                    <div className="flex h-[99px] overflow-hidden border-b border-white bg-linear-to-b from-[#c6c8c6] to-[#8f918f]">
                        <DrawPanel />
                        <ModifyPanel />
                        <LayersPanel />
                        <AnnotationPanel />
                        <BlockPanel />
                        <PropertiesPanel />
                        <GroupsPanel />
                        <UtilitiesPanel />
                        <ClipboardPanel />
                    </div>
                    <div className="h-[7px] border-b-2 border-[#8a8c8a] bg-[#5f615f]" />
                    <Canvas />
                    <LayoutTabs />
                    <footer className="flex h-[22px] items-center justify-between border-t border-black bg-linear-to-b from-[#949694] to-[#737573] pl-1.5 text-[#111] font-['Liberation_Sans',sans-serif]">
                        <span>Repeats the previously issued command</span>
                        <Icon w={12} h={12} className="mt-1.5 mr-px"><path d="M8 2h2M5 5.500h2M8 5.500h2M1 9h2M5 9h2M8 9h2" stroke="#e4e6e4" strokeWidth="2" /></Icon>
                    </footer>
                </div>
            </div>
            <ContextMenu />
            <svg width="14" height="24" viewBox="0 0 14 24" className="absolute top-[357px] left-[685px]" aria-hidden="true">
                <path d="M.5 1v20l4.500-4 3 6 3-1.500-3-6h6z" fill="#fff" stroke="#222" />
            </svg>
            <div className="absolute top-[691px] left-[576px] flex items-center text-[26px] leading-6 font-black text-[#a60000] [-webkit-text-stroke:1px_#a60000] [text-shadow:1px_1px_0_#fff,-1px_-1px_0_#fff,2px_2px_0_#d8b8b8] font-['Roboto']">
                <span>www.cizimegitim.com</span>
                <span className="h-[21px] w-2 border-2 border-[#a60000]" />
            </div>
        </div>
    );
}
